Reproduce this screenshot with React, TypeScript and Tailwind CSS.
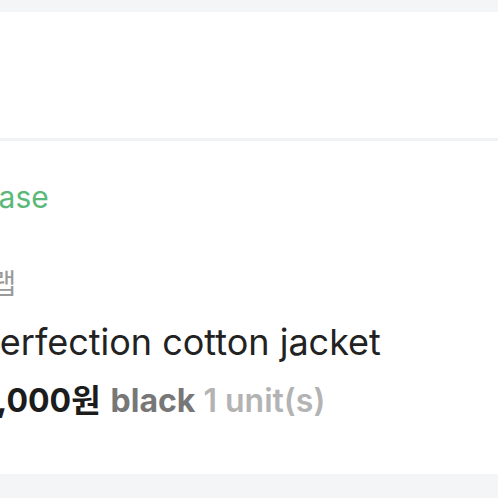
import React from "react";

const OrderSummary = () => {
  return (
    <div className="w-[498px] h-[498px] overflow-hidden bg-[#f4f5f7] font-['Inter','Noto_Sans_CJK_KR',sans-serif]">
      <div className="h-3" />
      <div className="h-[126px] bg-white" />
      <div className="h-[3px] bg-[#f1f2f4]" />
      <div className="h-[333px] bg-white flex flex-col whitespace-nowrap">
        <p className="mt-[41px] -ml-[84px] text-[30px] leading-none text-[#5cb87a]">Purchase</p>
        <p className="mt-[58px] -ml-[61px] text-[28px] leading-none text-[#9a9a9a]">어반랩</p>
        <p className="mt-[26px] -ml-[23px] text-[36px] leading-none text-[#222]">Perfection cotton jacket</p>
        <div className="mt-[25px] -ml-[44px] flex items-baseline text-[32px] leading-none">
          <span className="font-bold text-[#1c1c1c]">89,000원</span>
          <span className="ml-[10px] font-bold text-[#777]">black</span>
          <span className="ml-[8px] font-semibold text-[#b3b3b3]">1 unit(s)</span>
        </div>
      </div>
    </div>
  );
};

export default function App() {
  return <OrderSummary />;
}
